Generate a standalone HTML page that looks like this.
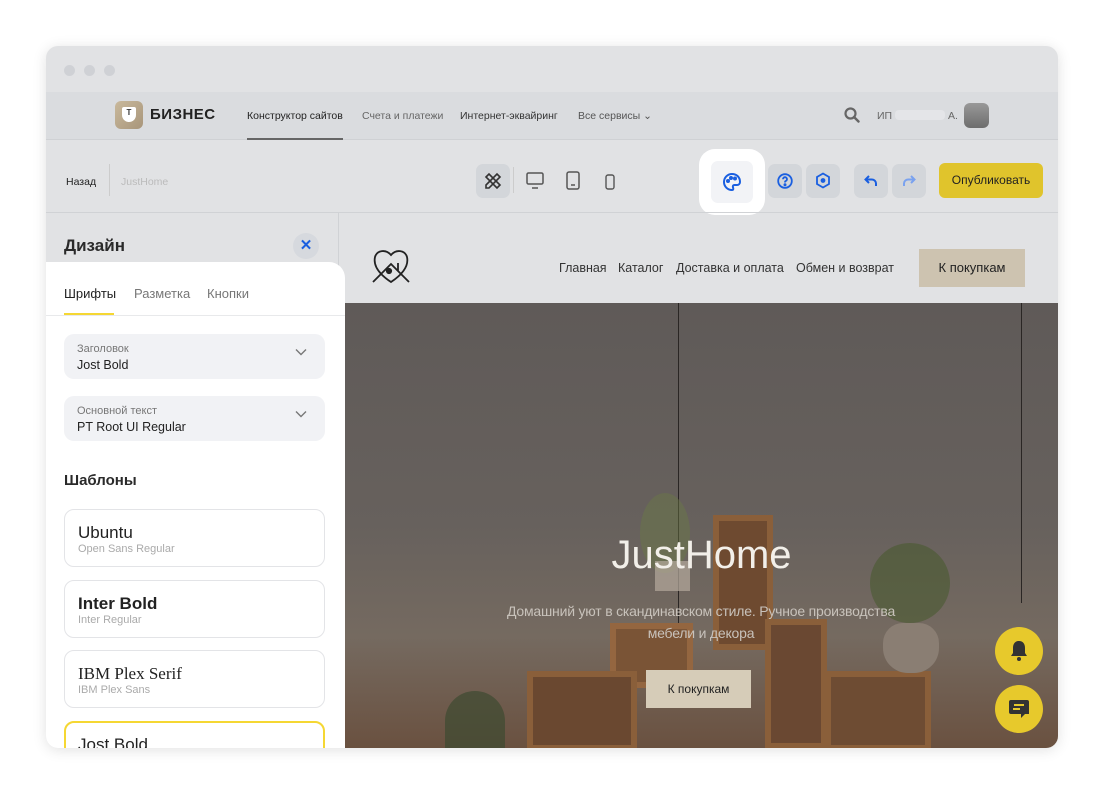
<!DOCTYPE html>
<html><head><meta charset="utf-8"><style>
*{box-sizing:border-box;margin:0;padding:0}
body{width:1104px;height:796px;background:#fff;font-family:"Liberation Sans",sans-serif;position:relative;overflow:hidden;color:#333}
.win{position:absolute;left:46px;top:46px;width:1012px;height:702px;border-radius:12px;overflow:hidden;background:#e1e2e4;box-shadow:0 2px 14px rgba(0,0,0,.12)}
.abs{position:absolute}
.dot{position:absolute;top:19px;width:11px;height:11px;border-radius:50%;background:#cfd1d5}
.nav{position:absolute;left:0;top:46px;width:1012px;height:48px;background:#dadcdf;border-bottom:1px solid #cfd1d4}
.nav span{position:absolute;top:18px;font-size:10.5px;color:#444}
.tb{position:absolute;top:118px;width:34px;height:34px;border-radius:7px;background:#d3d6da}
.mi{position:absolute;top:215px;font-size:12.5px;color:#333}
.sel{position:absolute;left:18px;width:261px;height:45px;background:#f1f2f5;border-radius:10px}
.sel .l{position:absolute;left:13px;top:9px;font-size:11px;color:#777}
.sel .v{position:absolute;left:13px;top:24px;font-size:12.5px;color:#222}
.sel .c{position:absolute;right:18px;top:14px}
.card{position:absolute;left:18px;width:261px;height:58px;border:1px solid #e3e4e7;border-radius:10px;background:#fff}
.card .t{position:absolute;left:13px;top:13px;font-size:17px;color:#222}
.card .s{position:absolute;left:13px;top:33px;font-size:11px;color:#aaa}
</style></head><body>
<div class="win">
 <div class="dot" style="left:18px"></div><div class="dot" style="left:38px"></div><div class="dot" style="left:58px"></div>
 <div class="nav">
  <div class="abs" style="left:69px;top:9px;width:28px;height:28px;border-radius:6px;background:linear-gradient(135deg,#c9b99c,#a8957a)"><div style="position:absolute;left:7px;top:6px;width:14px;height:15px;background:#fff;border-radius:2px 2px 7px 7px;font-size:8px;font-weight:bold;text-align:center;line-height:12px;color:#333">T</div></div>
  <div class="abs" style="left:104px;top:14px;font-size:15px;font-weight:bold;color:#222;letter-spacing:.5px">БИЗНЕС</div>
  <span style="left:201px;color:#222">Конструктор сайтов</span>
  <div class="abs" style="left:201px;top:46px;width:96px;height:2px;background:#666"></div>
  <span style="left:316px;color:#666">Счета и платежи</span>
  <span style="left:414px;color:#333">Интернет-эквайринг</span>
  <span style="left:532px;color:#555">Все сервисы ⌄</span>
  <svg class="abs" style="left:798px;top:15px" width="16" height="16" viewBox="0 0 16 16"><circle cx="6.5" cy="6.5" r="5" fill="none" stroke="#666" stroke-width="2.2"/><path d="M10 10l4.5 4.5" stroke="#666" stroke-width="2.4" stroke-linecap="round"/></svg>
  <span style="left:831px;color:#666">ИП</span>
  <div class="abs" style="left:849px;top:18px;width:50px;height:10px;background:#e4e5e8;border-radius:4px"></div>
  <span style="left:902px;color:#666">А.</span>
  <div class="abs" style="left:918px;top:11px;width:25px;height:25px;border-radius:6px;background:linear-gradient(#999,#6d6d6d)"></div>
 </div>
 <div class="abs" style="left:20px;top:130px;font-size:10.5px;color:#222">Назад</div>
 <div class="abs" style="left:63px;top:118px;width:1px;height:32px;background:#ccc"></div>
 <div class="abs" style="left:75px;top:130px;font-size:10.5px;color:#bbb">JustHome</div>
 <div class="tb" style="left:430px"></div>
 <svg class="abs" style="left:438px;top:126px" width="18" height="18" viewBox="0 0 18 18" fill="none" stroke="#333" stroke-width="1.6"><path d="M2 5l3-3 11 11-3 3z"/><path d="M16 5l-3-3L2 13v3h3z"/></svg>
 <div class="abs" style="left:467px;top:121px;width:1px;height:26px;background:#ccc"></div>
 <svg class="abs" style="left:479px;top:126px" width="20" height="18" viewBox="0 0 20 18" fill="none" stroke="#555" stroke-width="1.5"><rect x="2" y="1" width="16" height="11" rx="1.5"/><path d="M7 16h6"/></svg>
 <svg class="abs" style="left:520px;top:125px" width="14" height="19" viewBox="0 0 14 19" fill="none" stroke="#555" stroke-width="1.5"><rect x="1" y="1" width="12" height="17" rx="2"/><path d="M5 14h4"/></svg>
 <svg class="abs" style="left:559px;top:128px" width="10" height="16" viewBox="0 0 10 16" fill="none" stroke="#555" stroke-width="1.4"><rect x="1" y="1" width="8" height="14" rx="2"/></svg>
 <div class="abs" style="left:653px;top:103px;width:66px;height:66px;border-radius:16px;background:#fff"></div>
 <div class="abs" style="left:665px;top:115px;width:42px;height:42px;border-radius:7px;background:#f2f3f6"></div>
 <svg class="abs" style="left:676px;top:126px" width="20" height="20" viewBox="0 0 20 20" fill="none" stroke="#1a5fe0" stroke-width="2"><path d="M10 2a8 8 0 1 0 0 16c1.5 0 1.5-1.5 1-2.5s0-2.5 1.5-2.5H15a3 3 0 0 0 3-3C18 5 14.5 2 10 2z"/><circle cx="6" cy="9" r="1" fill="#1a5fe0"/><circle cx="9" cy="6" r="1" fill="#1a5fe0"/><circle cx="13" cy="6.5" r="1" fill="#1a5fe0"/></svg>
 <div class="tb" style="left:722px"></div>
 <svg class="abs" style="left:731px;top:127px" width="16" height="16" viewBox="0 0 16 16" fill="none" stroke="#1a5fe0" stroke-width="1.8"><circle cx="8" cy="8" r="6.8"/><path d="M6 6.2a2 2 0 1 1 2.6 1.9c-.6.2-.6.7-.6 1.4"/><circle cx="8" cy="11.8" r=".6" fill="#1a5fe0"/></svg>
 <div class="tb" style="left:760px"></div>
 <svg class="abs" style="left:769px;top:126px" width="16" height="17" viewBox="0 0 16 17" fill="none" stroke="#1a5fe0" stroke-width="1.8"><path d="M8 1.5l6 3.5v7l-6 3.5-6-3.5v-7z"/><circle cx="8" cy="8.5" r="1.5" fill="#1a5fe0"/></svg>
 <div class="tb" style="left:808px"></div>
 <svg class="abs" style="left:818px;top:129px" width="14" height="12" viewBox="0 0 14 12" fill="none" stroke="#1a5fe0" stroke-width="2"><path d="M5 1L1.5 4.5 5 8M2 4.5h6a4 4 0 0 1 4 4V11"/></svg>
 <div class="tb" style="left:846px"></div>
 <svg class="abs" style="left:856px;top:129px" width="14" height="12" viewBox="0 0 14 12" fill="none" stroke="#7aa2ef" stroke-width="2"><path d="M9 1l3.5 3.5L9 8M12 4.5H6a4 4 0 0 0-4 4V11"/></svg>
 <div class="abs" style="left:893px;top:117px;width:104px;height:35px;border-radius:6px;background:#e0c42c;font-size:12px;color:#222;text-align:center;line-height:35px">Опубликовать</div>
 <div class="abs" style="left:0;top:166px;width:1012px;height:1px;background:#d0d2d5"></div>
 <div class="abs" style="left:292px;top:166px;width:1px;height:60px;background:#d0d2d5"></div>
 <div class="abs" style="left:18px;top:190px;font-size:17px;font-weight:bold;color:#2a2a2a">Дизайн</div>
 <div class="abs" style="left:247px;top:187px;width:26px;height:26px;border-radius:50%;background:#d6d9de;color:#1a5fe0;font-size:15px;text-align:center;line-height:25px;font-weight:bold">✕</div>
 <div class="abs" style="left:0;top:216px;width:299px;height:490px;background:#fff;border-radius:0 16px 0 0">
  <div class="abs" style="left:18px;top:24px;font-size:13px;color:#222">Шрифты</div>
  <div class="abs" style="left:88px;top:24px;font-size:13px;color:#777">Разметка</div>
  <div class="abs" style="left:161px;top:24px;font-size:13px;color:#777">Кнопки</div>
  <div class="abs" style="left:18px;top:51px;width:50px;height:2px;background:#f5d733"></div>
  <div class="abs" style="left:0;top:53px;width:299px;height:1px;background:#e8e9eb"></div>
  <div class="sel" style="top:72px"><div class="l">Заголовок</div><div class="v">Jost Bold</div><svg class="c" width="12" height="8" viewBox="0 0 12 8"><path d="M1 1.5l5 5 5-5" fill="none" stroke="#777" stroke-width="1.4"/></svg></div>
  <div class="sel" style="top:134px"><div class="l">Основной текст</div><div class="v">PT Root UI Regular</div><svg class="c" width="12" height="8" viewBox="0 0 12 8"><path d="M1 1.5l5 5 5-5" fill="none" stroke="#777" stroke-width="1.4"/></svg></div>
  <div class="abs" style="left:18px;top:210px;font-size:15px;font-weight:bold;color:#2a2a2a">Шаблоны</div>
  <div class="card" style="top:247px"><div class="t">Ubuntu</div><div class="s">Open Sans Regular</div></div>
  <div class="card" style="top:318px"><div class="t" style="font-weight:bold">Inter Bold</div><div class="s">Inter Regular</div></div>
  <div class="card" style="top:388px"><div class="t" style="font-family:'Liberation Serif',serif">IBM Plex Serif</div><div class="s">IBM Plex Sans</div></div>
  <div class="card" style="top:459px;border:2px solid #f5d733"><div class="t" style="left:12px;top:12px">Jost Bold</div></div>
 </div>
 <svg class="abs" style="left:325px;top:200px" width="40" height="40" viewBox="0 0 40 40" fill="none" stroke="#222" stroke-width="1.8"><path d="M20 36C8 28 2 20 4 11c2-7 11-8 16-2 5-6 14-5 16 2 2 9-4 17-16 25z"/><path d="M2 36L20 18l18 18M27 25v-8"/><circle cx="18" cy="25" r="2.2" fill="#222"/></svg>
 <div class="mi" style="left:513px">Главная</div>
 <div class="mi" style="left:572px">Каталог</div>
 <div class="mi" style="left:630px">Доставка и оплата</div>
 <div class="mi" style="left:750px">Обмен и возврат</div>
 <div class="abs" style="left:873px;top:203px;width:106px;height:38px;background:#cdc3b0;font-size:13px;color:#222;text-align:center;line-height:38px">К покупкам</div>
 <div class="abs" style="left:299px;top:257px;width:713px;height:445px;background:linear-gradient(180deg,#5f5a58 0%,#67615d 50%,#756a60 75%,#6a5140 100%);overflow:hidden">
  <div class="abs" style="left:333px;top:0;width:1px;height:370px;background:#2a2624"></div>
  <div class="abs" style="left:676px;top:0;width:1px;height:300px;background:#2a2624"></div>
  <div class="abs" style="left:100px;top:388px;width:60px;height:57px;background:#3d4a30;border-radius:30px 30px 0 0;opacity:.7"></div>
  <div class="abs" style="left:295px;top:190px;width:50px;height:80px;background:#6a7a45;border-radius:50%;opacity:.45"></div>
  <div class="abs" style="left:310px;top:258px;width:35px;height:30px;background:#b5aa9c;opacity:.7"></div>
  <div class="abs" style="left:368px;top:212px;width:60px;height:135px;border:6px solid #8a5f3a;background:#6e4a30"></div>
  <div class="abs" style="left:265px;top:320px;width:83px;height:65px;border:6px solid #946640;background:#7a5436"></div>
  <div class="abs" style="left:420px;top:316px;width:62px;height:130px;border:6px solid #8a5f3a;background:#6a4832"></div>
  <div class="abs" style="left:182px;top:368px;width:110px;height:80px;border:6px solid #8a5f3a;background:#6a4830"></div>
  <div class="abs" style="left:480px;top:368px;width:106px;height:80px;border:6px solid #8a5f3a;background:#6e4c33"></div>
  <div class="abs" style="left:538px;top:320px;width:56px;height:50px;border-radius:20px 20px 25px 25px;background:#8a7e73"></div>
  <div class="abs" style="left:525px;top:240px;width:80px;height:80px;background:#4a5a30;border-radius:50%;opacity:.6"></div>
  <div class="abs" style="left:0;top:230px;width:713px;text-align:center;font-size:40px;color:#f2efe9">JustHome</div>
  <div class="abs" style="left:141px;top:297px;width:430px;text-align:center;font-size:14px;line-height:22px;color:#c8c2bb;letter-spacing:-.2px">Домашний уют в скандинавском стиле. Ручное производства мебели и декора</div>
  <div class="abs" style="left:301px;top:367px;width:105px;height:38px;background:#d6ccb8;font-size:12px;color:#222;text-align:center;line-height:38px">К покупкам</div>
 </div>
 <div class="abs" style="left:949px;top:581px;width:48px;height:48px;border-radius:50%;background:#e7c92c"></div>
 <svg class="abs" style="left:963px;top:594px" width="20" height="22" viewBox="0 0 20 22"><path d="M10 1c-4 0-6 3-6 7v5l-2 3h16l-2-3V8c0-4-2-7-6-7z" fill="#333"/><circle cx="10" cy="19" r="2" fill="#333"/></svg>
 <div class="abs" style="left:949px;top:639px;width:48px;height:48px;border-radius:50%;background:#e7c92c"></div>
 <svg class="abs" style="left:962px;top:653px" width="22" height="21" viewBox="0 0 22 21"><path d="M3 1h16a2 2 0 0 1 2 2v12h-4l-4 4v-4H3a2 2 0 0 1-2-2V3a2 2 0 0 1 2-2z" fill="#333"/><path d="M6 6h10M5 10h7" stroke="#e7c92c" stroke-width="2"/></svg>
</div>
</body></html>
